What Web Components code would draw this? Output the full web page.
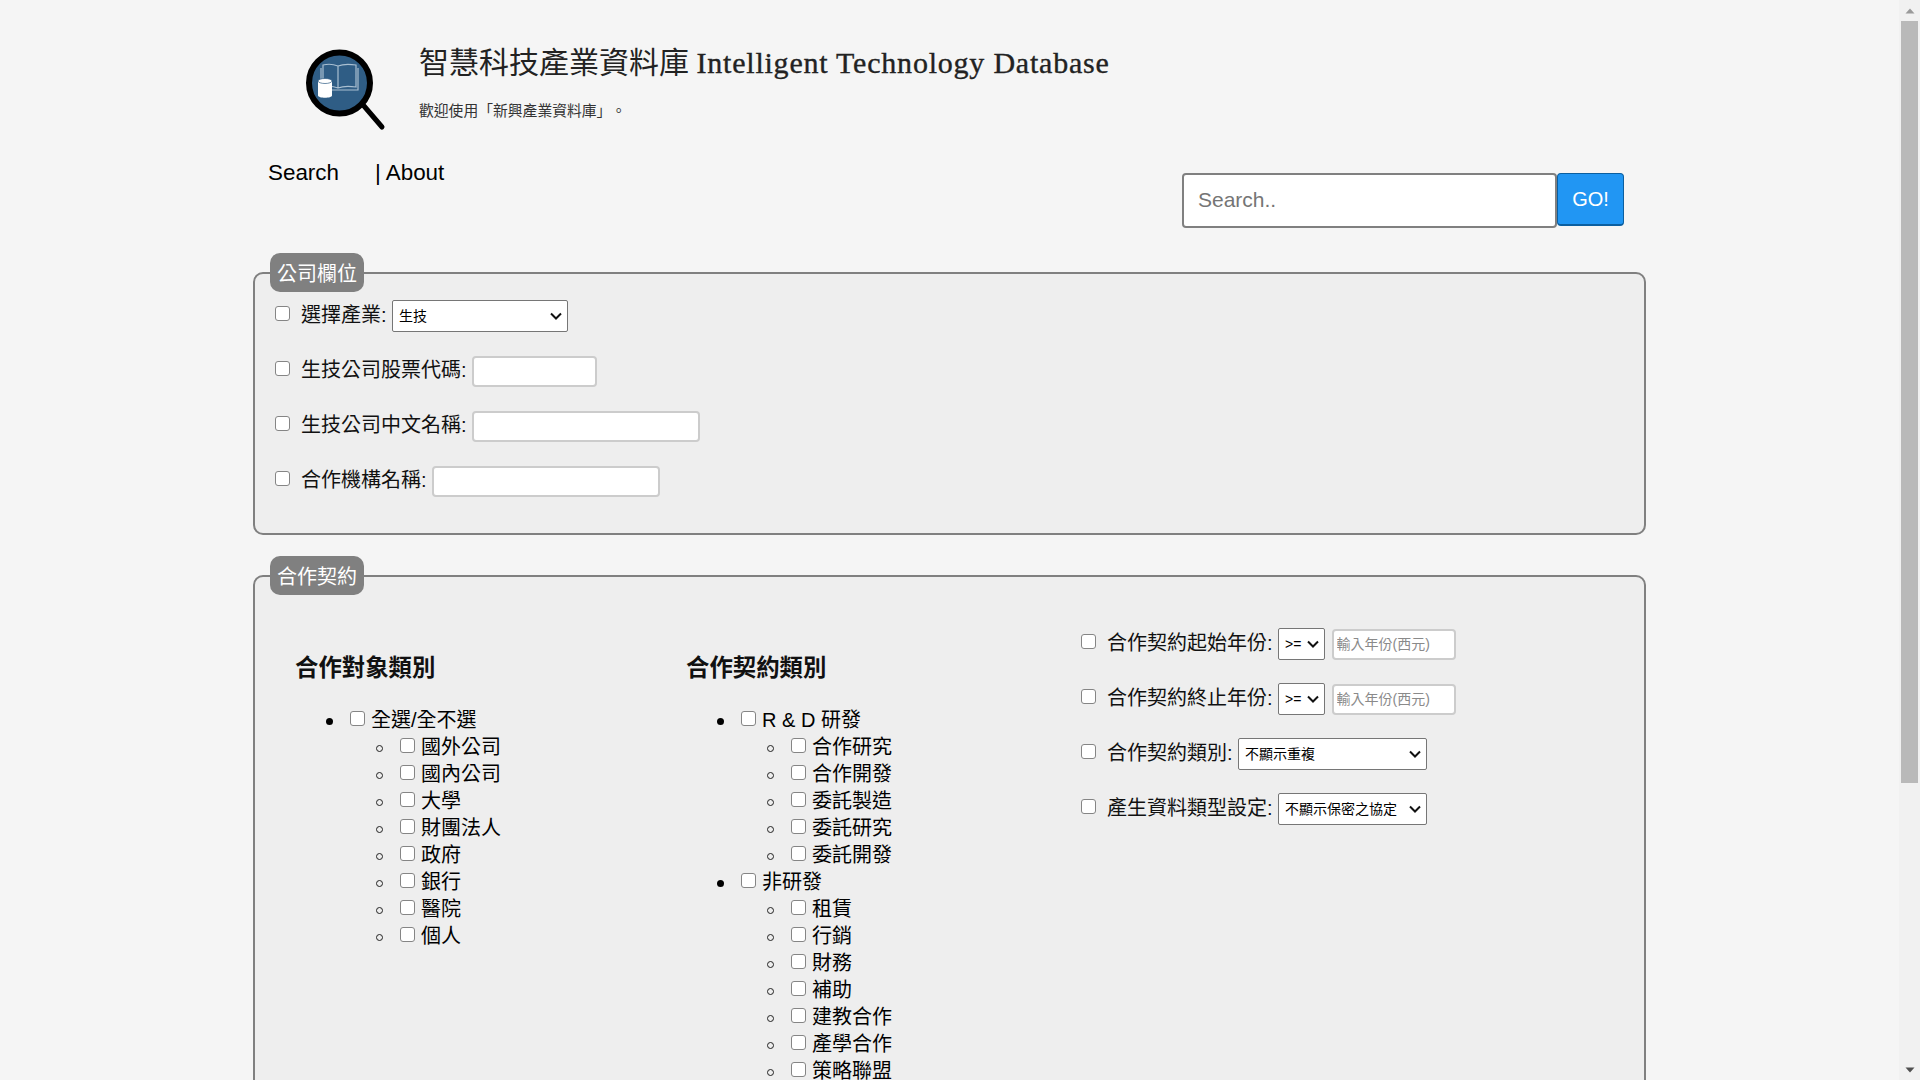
<!DOCTYPE html>
<html lang="zh-Hant">
<head>
<meta charset="utf-8">
<title>智慧科技產業資料庫</title>
<style>
html, body { margin: 0; height: 100%; overflow: hidden; }
body {
    background: #f5f5f5;
    color: #000;
    font-family: "Liberation Sans", "Noto Sans CJK TC", sans-serif;
}
</style>
</head>
<body>
<x-app>
    <x-header title-zh="智慧科技產業資料庫" title-en="Intelligent Technology Database" welcome="歡迎使用「新興產業資料庫」。"></x-header>
    <x-toolbar></x-toolbar>

    <x-panel legend="公司欄位">
        <x-field label="選擇產業:"><x-select value="生技" width="176"></x-select></x-field>
        <x-field label="生技公司股票代碼:"><x-text width="125"></x-text></x-field>
        <x-field label="生技公司中文名稱:"><x-text width="228"></x-text></x-field>
        <x-field label="合作機構名稱:"><x-text width="228"></x-text></x-field>
    </x-panel>

    <x-panel legend="合作契約" tall>
        <x-columns>
            <x-checklist title="合作對象類別">
                <x-group label="全選/全不選">
                    <x-item label="國外公司"></x-item>
                    <x-item label="國內公司"></x-item>
                    <x-item label="大學"></x-item>
                    <x-item label="財團法人"></x-item>
                    <x-item label="政府"></x-item>
                    <x-item label="銀行"></x-item>
                    <x-item label="醫院"></x-item>
                    <x-item label="個人"></x-item>
                </x-group>
            </x-checklist>
            <x-checklist title="合作契約類別">
                <x-group label="R &amp; D 研發">
                    <x-item label="合作研究"></x-item>
                    <x-item label="合作開發"></x-item>
                    <x-item label="委託製造"></x-item>
                    <x-item label="委託研究"></x-item>
                    <x-item label="委託開發"></x-item>
                </x-group>
                <x-group label="非研發">
                    <x-item label="租賃"></x-item>
                    <x-item label="行銷"></x-item>
                    <x-item label="財務"></x-item>
                    <x-item label="補助"></x-item>
                    <x-item label="建教合作"></x-item>
                    <x-item label="產學合作"></x-item>
                    <x-item label="策略聯盟"></x-item>
                </x-group>
            </x-checklist>
            <div>
                <x-field label="合作契約起始年份:"><x-select value="&gt;=" width="47"></x-select><x-text width="124" placeholder="輸入年份(西元)"></x-text></x-field>
                <x-field label="合作契約終止年份:"><x-select value="&gt;=" width="47"></x-select><x-text width="124" placeholder="輸入年份(西元)"></x-text></x-field>
                <x-field label="合作契約類別:"><x-select value="不顯示重複" width="189"></x-select></x-field>
                <x-field label="產生資料類型設定:"><x-select value="不顯示保密之協定" width="149"></x-select></x-field>
            </div>
        </x-columns>
    </x-panel>
</x-app>

<script>
const SANS = `"Liberation Sans", "Noto Sans CJK TC", sans-serif`;
const CHEVRON = `url("data:image/svg+xml,%3Csvg xmlns='http://www.w3.org/2000/svg' width='12' height='8' viewBox='0 0 12 8'%3E%3Cpath d='M1 1.5L6 6.5L11 1.5' fill='none' stroke='%23111' stroke-width='2'/%3E%3C/svg%3E")`;
const CHECKBOX = `
    appearance: none;
    width: 15px;
    height: 15px;
    box-sizing: border-box;
    flex: none;
    background: #fff;
    border: 1.4px solid #858585;
    border-radius: 3px;
`;

customElements.define("x-app", class extends HTMLElement {
    constructor() {
        super();
        this.attachShadow({ mode: "open" });
        this.shadowRoot.innerHTML = `
        <style>
        :host { display: flex; height: 100vh; overflow: hidden; }
        main { flex: 1; min-width: 0; height: 100vh; overflow: hidden; }
        .bar {
            flex: none;
            width: 21px;
            height: 100vh;
            box-sizing: border-box;
            background: #f1f1f1;
            display: flex;
            flex-direction: column;
            align-items: center;
        }
        .arrow { flex: none; width: 100%; height: 21px; display: flex; align-items: center; justify-content: center; }
        .track { flex: 1; width: 100%; padding: 0 2px; box-sizing: border-box; }
        .thumb { height: 762px; background: #b9b9b9; }
        </style>
        <main><slot></slot></main>
        <div class="bar">
            <div class="arrow"><svg width="10" height="6" viewBox="0 0 10 6"><path d="M5 0.5L9.5 5.5H0.5Z" fill="#9a9a9a"/></svg></div>
            <div class="track"><div class="thumb"></div></div>
            <div class="arrow"><svg width="10" height="6" viewBox="0 0 10 6"><path d="M5 5.5L9.5 0.5H0.5Z" fill="#505050"/></svg></div>
        </div>
        `;
    }
});

customElements.define("x-header", class extends HTMLElement {
    constructor() {
        super();
        this.attachShadow({ mode: "open" });
    }
    connectedCallback() {
        this.shadowRoot.innerHTML = `
        <style>
        :host { display: flex; padding: 44px 0 0 302px; height: 100px; color: #222; }
        svg { flex: none; display: block; width: 88px; height: 88px; }
        .text { margin-left: 29px; margin-top: 1px; }
        h1 {
            margin: 0;
            font: 400 30px/36px "Liberation Serif", "Noto Sans CJK TC", serif;
            white-space: nowrap;
        }
        h1 span { letter-spacing: 0.78px; -webkit-text-stroke: 0.35px #222; }
        p { margin: 20px 0 0; font: 14.8px/20px ${SANS}; color: #333; text-spacing-trim: space-all; }
        </style>
        <svg viewBox="0 0 88 88">
            <line x1="62" y1="62" x2="80" y2="83" stroke="#000" stroke-width="5" stroke-linecap="round"/>
            <circle cx="37.5" cy="39" r="30.5" fill="#2f5d85" stroke="#000" stroke-width="6"/>
            <path d="M36 22C31 20 25 20 21 21V43C25 42 31 42 36 44C41 42 47 42 54 43V21C47 20 41 20 36 22ZM36 22V44M19 24V46H56V24" fill="none" stroke="#a9bfd1" stroke-width="1.2"/>
            <path d="M16 37V51.5C16 54.5 30 54.5 30 51.5V37Z" fill="#fff"/>
            <ellipse cx="23" cy="37" rx="7" ry="2.5" fill="#fff" stroke="#2f5d85" stroke-width="0.7"/>
        </svg>
        <div class="text">
            <h1>${this.getAttribute("title-zh")} <span>${this.getAttribute("title-en")}</span></h1>
            <p>${this.getAttribute("welcome")}</p>
        </div>
        `;
    }
});

customElements.define("x-toolbar", class extends HTMLElement {
    constructor() {
        super();
        this.attachShadow({ mode: "open" });
        this.shadowRoot.innerHTML = `
        <style>
        :host { display: flex; justify-content: space-between; padding: 16px 0 0 268px; width: 1624px; height: 109px; box-sizing: border-box; font: 22.4px ${SANS}; }
        nav { display: flex; gap: 36px; line-height: 26px; }
        a { color: #000; text-decoration: none; white-space: nowrap; }
        form { display: flex; align-items: flex-start; margin: 13px 0 0; }
        input {
            width: 375px;
            height: 55px;
            box-sizing: border-box;
            padding: 0 14px 2px;
            border: 2px solid #808080;
            border-radius: 4px;
            background: #fff;
            font: 21px ${SANS};
            outline: none;
        }
        input::placeholder { color: #757575; }
        button {
            width: 67px;
            height: 53px;
            box-sizing: border-box;
            padding: 0;
            background: #2196f3;
            border: 1px solid #0b5fa0;
            border-bottom-width: 2px;
            border-radius: 4px;
            color: #fff;
            font: 20px ${SANS};
        }
        </style>
        <nav><a href="#">Search</a><a href="#">| About</a></nav>
        <form onsubmit="return false">
            <input type="text" placeholder="Search..">
            <button type="button">GO!</button>
        </form>
        `;
    }
});

customElements.define("x-panel", class extends HTMLElement {
    constructor() {
        super();
        this.attachShadow({ mode: "open" });
    }
    connectedCallback() {
        const tall = this.hasAttribute("tall");
        this.shadowRoot.innerHTML = `
        <style>
        :host { display: block; width: 1393px; margin: 0 0 21px 253px; }
        fieldset {
            margin: 0;
            padding: ${tall ? "33px 15px 60px 25px" : "8px 15px 13px 20px"};
            background: #eee;
            border: 2px solid #808080;
            border-radius: 10px;
            box-sizing: border-box;
            min-width: 0;
        }
        legend {
            margin-left: ${tall ? "-10px" : "-5px"};
            padding: 0 7px;
            height: 39px;
            box-sizing: border-box;
            background: #808080;
            border-radius: 10px;
            color: #fff;
            font: 20px/42px ${SANS};
        }
        </style>
        <fieldset>
            <legend>${this.getAttribute("legend")}</legend>
            <slot></slot>
        </fieldset>
        `;
    }
});

customElements.define("x-columns", class extends HTMLElement {
    constructor() {
        super();
        this.attachShadow({ mode: "open" });
        this.shadowRoot.innerHTML = `
        <style>
        :host { display: grid; grid-template-columns: 391px 395px 1fr; margin-left: 15px; }
        </style>
        <slot></slot>
        `;
    }
});

customElements.define("x-field", class extends HTMLElement {
    constructor() {
        super();
        this.attachShadow({ mode: "open" });
    }
    connectedCallback() {
        this.shadowRoot.innerHTML = `
        <style>
        :host { display: flex; align-items: center; height: 32px; margin-bottom: 23px; font: 20px/28px ${SANS}; white-space: nowrap; }
        input { ${CHECKBOX} margin: 0 11px 5px 0; }
        span { margin: 0 5.5px 2px 0; color: #111; }
        .controls { display: flex; align-items: center; gap: 6.5px; }
        </style>
        <input type="checkbox">
        <span>${this.getAttribute("label")}</span>
        <div class="controls"><slot></slot></div>
        `;
    }
});

customElements.define("x-select", class extends HTMLElement {
    constructor() {
        super();
        this.attachShadow({ mode: "open" });
    }
    connectedCallback() {
        const opt = document.createElement("option");
        opt.textContent = this.getAttribute("value");
        this.shadowRoot.innerHTML = `
        <style>
        :host { display: block; }
        select {
            display: block;
            appearance: none;
            width: ${this.getAttribute("width")}px;
            height: 32px;
            box-sizing: border-box;
            margin: 0;
            padding: 0 18px 0 6px;
            background: #fff ${CHEVRON} no-repeat right 5px center;
            color: #000;
            border: 1px solid #767676;
            border-radius: 2px;
            font: 14px ${SANS};
        }
        </style>
        <select></select>
        `;
        this.shadowRoot.querySelector("select").appendChild(opt);
    }
});

customElements.define("x-text", class extends HTMLElement {
    constructor() {
        super();
        this.attachShadow({ mode: "open" });
    }
    connectedCallback() {
        this.shadowRoot.innerHTML = `
        <style>
        :host { display: block; }
        input {
            display: block;
            width: ${this.getAttribute("width")}px;
            height: 31px;
            box-sizing: border-box;
            margin: 0;
            padding: 0 3px;
            background: #fff;
            border: 2px solid #ccc;
            border-radius: 4px;
            font: 14px ${SANS};
            outline: none;
        }
        input::placeholder { color: #8a8a8a; }
        </style>
        <input type="text" placeholder="${this.getAttribute("placeholder") || ""}">
        `;
    }
});

customElements.define("x-checklist", class extends HTMLElement {
    constructor() {
        super();
        this.attachShadow({ mode: "open" });
    }
    connectedCallback() {
        this.shadowRoot.innerHTML = `
        <style>
        :host { display: block; padding-top: 25px; }
        h3 { margin: 0 0 24.5px; font: 700 23.4px/30px ${SANS}; color: #111; }
        </style>
        <h3>${this.getAttribute("title")}</h3>
        <slot></slot>
        `;
    }
});

const ROW_STYLE = `
.head { height: 27px; display: flex; align-items: center; white-space: nowrap; margin-left: -24px; }
.mark { flex: none; width: 7px; height: 7px; box-sizing: border-box; border-radius: 50%; margin-right: 17px; }
input { ${CHECKBOX} margin: 0 6px 5px 0; }
span { margin-bottom: 2px; }
`;

customElements.define("x-group", class extends HTMLElement {
    constructor() {
        super();
        this.attachShadow({ mode: "open" });
    }
    connectedCallback() {
        this.shadowRoot.innerHTML = `
        <style>
        :host { display: block; margin-left: 55px; font: 20px/27px ${SANS}; }
        ${ROW_STYLE}
        .mark { background: #000; }
        </style>
        <div class="head"><i class="mark"></i><input type="checkbox"><span>${this.getAttribute("label")}</span></div>
        <slot></slot>
        `;
    }
});

customElements.define("x-item", class extends HTMLElement {
    constructor() {
        super();
        this.attachShadow({ mode: "open" });
    }
    connectedCallback() {
        this.shadowRoot.innerHTML = `
        <style>
        :host { display: block; margin-left: 50px; font: 20px/27px ${SANS}; }
        ${ROW_STYLE}
        .mark { border: 1.5px solid #222; }
        </style>
        <div class="head"><i class="mark"></i><input type="checkbox"><span>${this.getAttribute("label")}</span></div>
        `;
    }
});
</script>
</body>
</html>
